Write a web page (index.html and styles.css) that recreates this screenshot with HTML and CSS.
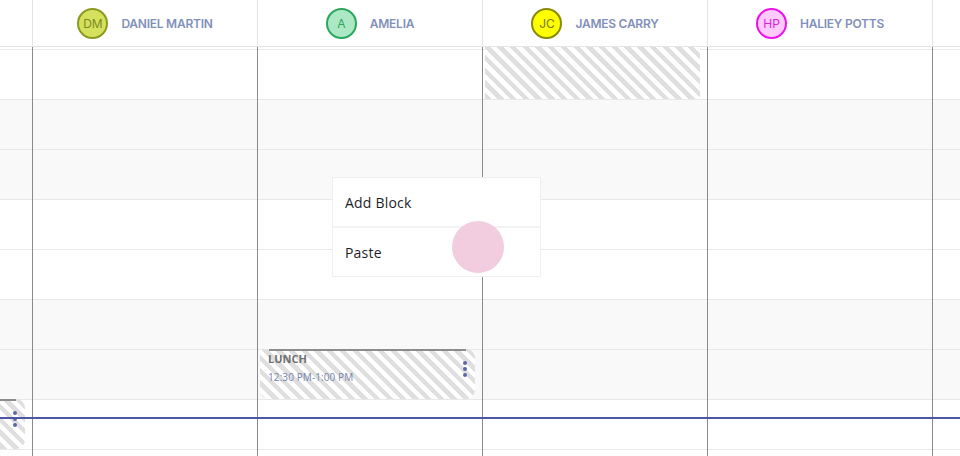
FILE: index.html
```html
<!DOCTYPE html>
<html lang="en">
<head>
<meta charset="utf-8">
<title>Schedule</title>
<link rel="stylesheet" href="styles.css">
</head>
<body>
<div class="app">
  <div class="header cols">
    <div class="hcell first"></div>
    <div class="hcell">
      <span class="avatar av-dm">DM</span>
      <span class="name">DANIEL MARTIN</span>
    </div>
    <div class="hcell">
      <span class="avatar av-a">A</span>
      <span class="name">AMELIA</span>
    </div>
    <div class="hcell">
      <span class="avatar av-jc">JC</span>
      <span class="name">JAMES CARRY</span>
    </div>
    <div class="hcell">
      <span class="avatar av-hp">HP</span>
      <span class="name">HALIEY POTTS</span>
    </div>
    <div class="hcell"></div>
  </div>

  <div class="body cols">
    <div class="slot r2"></div>
    <div class="slot r3 alt"></div>
    <div class="slot r4 alt"></div>
    <div class="slot r5"></div>
    <div class="slot r6"></div>
    <div class="slot r7 alt"></div>
    <div class="slot r8 alt"></div>
    <div class="slot r9"></div>
    <div class="slot r10"></div>

    <div class="col c2"></div>
    <div class="col c3"></div>
    <div class="col c4"></div>
    <div class="col c5"></div>
    <div class="col c6"></div>

    <div class="block unavail"></div>

    <div class="block event lunch">
      <div class="ev-title">LUNCH</div>
      <div class="ev-time">12:30 PM-1:00 PM</div>
      <svg class="dots" width="4" height="16" viewBox="0 0 4 16"><circle cx="2" cy="2" r="2"/><circle cx="2" cy="8" r="2"/><circle cx="2" cy="14" r="2"/></svg>
    </div>

    <div class="block event prev">
      <svg class="dots" width="4" height="16" viewBox="0 0 4 16"><circle cx="2" cy="2" r="2"/><circle cx="2" cy="8" r="2"/><circle cx="2" cy="14" r="2"/></svg>
    </div>
  </div>

  <div class="now-line"></div>

  <div class="menu">
    <div class="menu-item">Add Block</div>
    <div class="sep"></div>
    <div class="menu-item">Paste</div>
  </div>
  <div class="ripple"></div>
</div>
</body>
</html>
```

FILE: styles.css
```css
* { box-sizing: border-box; }
html, body { margin: 0; padding: 0; background: #fff; }

.app {
  position: relative;
  width: 960px;
  height: 456px;
  overflow: hidden;
  font-family: "Inter", "Open Sans", sans-serif;
}

.cols {
  display: grid;
  grid-template-columns: repeat(6, 225px);
  margin-left: -193px;
}

/* header */
.header {
  height: 47px;
  border-bottom: 1px solid #e4e4e4;
}
.hcell {
  border-left: 1px solid #e4e4e4;
  display: flex;
  align-items: center;
  justify-content: center;
  gap: 13px;
}
.hcell.first { border-left: 0; }

.avatar {
  width: 31px;
  height: 31px;
  border-radius: 50%;
  border: 2px solid;
  display: flex;
  align-items: center;
  justify-content: center;
  font-size: 12px;
  font-weight: 400;
}
.av-dm { background: #d5e15d; border-color: #8a9a1f; color: #7b8a22; }
.av-a  { background: #ade8c5; border-color: #2ba75d; color: #2ba75d; }
.av-jc { background: #ffff00; border-color: #8a8a05; color: #76761a; }
.av-hp { background: #ffcbff; border-color: #ec10ec; color: #dd22dd; }

.name {
  font-size: 12px;
  font-weight: 600;
  letter-spacing: -0.25px;
  color: #8190ba;
}

/* body grid */
.body {
  grid-template-rows: 2px repeat(9, 50px);
  height: 409px;
}
.slot {
  grid-column: 1 / -1;
  border-top: 1px solid #e8e8e8;
}
.slot.alt { background: #f9f9f9; }
.r2 { grid-row: 2; } .r3 { grid-row: 3; } .r4 { grid-row: 4; }
.r5 { grid-row: 5; } .r6 { grid-row: 6; } .r7 { grid-row: 7; }
.r8 { grid-row: 8; } .r9 { grid-row: 9; } .r10 { grid-row: 10; }

.col {
  grid-row: 1 / -1;
  border-left: 1px solid #8a8a8a;
}
.c2 { grid-column: 2; } .c3 { grid-column: 3; } .c4 { grid-column: 4; }
.c5 { grid-column: 5; } .c6 { grid-column: 6; }

.block {
  width: 215px;
  margin-left: 3px;
  background: repeating-linear-gradient(45deg, #dfdfdf 0 4.5px, #ffffff 4.5px 9px);
}
.unavail {
  grid-column: 4;
  grid-row: 1 / 3;
}
.event {
  position: relative;
  border-radius: 0 9px 9px 9px;
  padding: 3px 8px 0;
  font-family: "Open Sans", sans-serif;
}
.event::before {
  content: "";
  position: absolute;
  left: 9px;
  right: 9px;
  top: 0;
  height: 2px;
  background: #8c8c8c;
}
.lunch { grid-column: 3; grid-row: 8; }
.prev { grid-column: 1; grid-row: 9; }

.ev-title {
  font-size: 11px;
  font-weight: 700;
  color: #6f6f6f;
  line-height: 14px;
}
.ev-time {
  margin-top: 5px;
  font-size: 10px;
  letter-spacing: 0.1px;
  color: #7583b0;
  line-height: 13px;
}
.dots {
  position: absolute;
  right: 8px;
  top: 12px;
  fill: #5b68a6;
}

/* overlays */
.now-line {
  position: absolute;
  left: 0;
  right: 0;
  top: 417px;
  height: 2px;
  background: #4b57a5;
  z-index: 5;
}

.menu {
  position: absolute;
  left: 332px;
  top: 177px;
  width: 209px;
  background: #fff;
  border: 1px solid #efefef;
  z-index: 10;
  font-family: "Open Sans", sans-serif;
}
.menu-item {
  height: 48px;
  padding-left: 12px;
  display: flex;
  align-items: center;
  font-size: 14px;
  letter-spacing: 0.2px;
  color: #1e1e28;
}
.sep {
  height: 2px;
  background: #f3f3f3;
}

.ripple {
  position: absolute;
  left: 452px;
  top: 221px;
  width: 52px;
  height: 52px;
  border-radius: 50%;
  background: #f2cde0;
  z-index: 11;
}
```
